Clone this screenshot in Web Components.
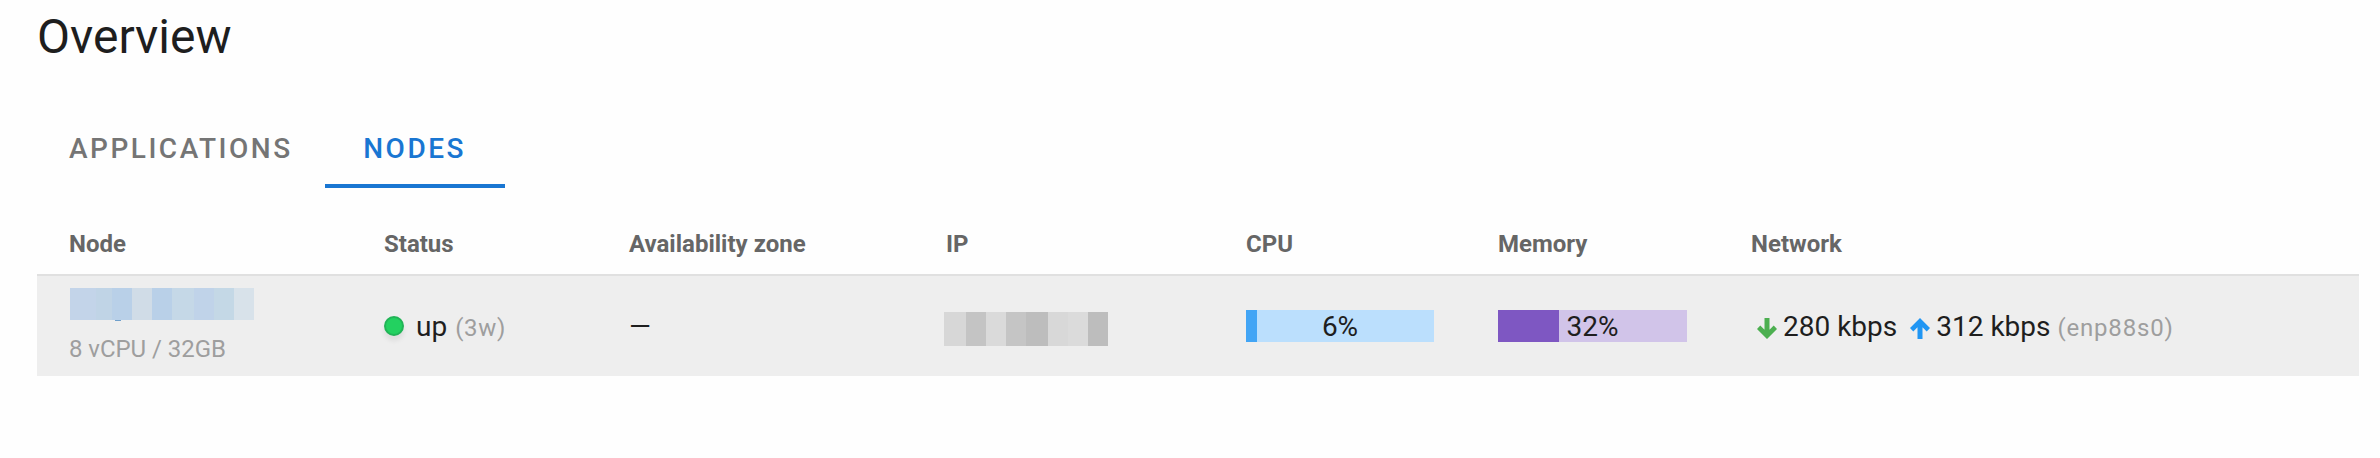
<!DOCTYPE html>
<html lang="en">
<head>
<meta charset="utf-8">
<title>Overview</title>
<style>
body{margin:0;background:#fefefe;font-family:Roboto,sans-serif;color:#1e1e1e}
</style>
</head>
<body>
<overview-page></overview-page>
<script>
const define=(name,html)=>customElements.define(name,class extends HTMLElement{
  constructor(){
    super();
    const t=document.createElement('template');
    t.innerHTML=html;
    this.attachShadow({mode:'open'}).append(t.content.cloneNode(true));
  }
});

define('tab-item',`<style>
:host{display:flex;flex-direction:column;align-items:center;min-width:180px;height:96px;box-sizing:border-box;padding:0 32px;font-size:28px;font-weight:500;letter-spacing:2.5px;line-height:114px;color:#757575;border-bottom:4px solid transparent}
:host([active]){color:#1976d2;border-bottom-color:#1976d2}
</style><slot></slot>`);

define('status-led',`<style>
:host{display:block;width:20px;height:20px;box-sizing:border-box;border-radius:50%;background:#23d160;border:2px solid #21b457;box-shadow:0 5px 5px rgba(0,0,0,.07)}
</style>`);

define('net-arrow',`<style>
:host{display:block;width:20px;height:21px;color:#4caf50}
:host([up]){color:#2196f3;transform:rotate(180deg)}
svg{display:block}
</style><svg width="20" height="21" viewBox="0 0 20 21"><path fill="currentColor" d="M7.5 0h5v11.8L16.7 7.6 20 10.9 10 21 0 10.9 3.3 7.6 7.5 11.8z"/></svg>`);

customElements.define('usage-bar',class extends HTMLElement{
  constructor(){
    super();
    this.attachShadow({mode:'open'}).innerHTML=`<style>
:host{display:block;height:32px;line-height:33px;font-size:28px;text-align:center;
 background:linear-gradient(90deg,var(--fill) var(--value),var(--track) var(--value))}
</style><slot></slot>`;
  }
  connectedCallback(){this.style.setProperty('--value',this.getAttribute('value')+'%')}
});

customElements.define('redacted-text',class extends HTMLElement{
  connectedCallback(){
    const cells=this.getAttribute('cells').split(' ').map(c=>{
      const [w,color]=c.split(':');
      return `<i style="width:${w}px;background:${color}"></i>`;
    }).join('');
    this.attachShadow({mode:'open'}).innerHTML=`<style>:host{display:flex}i{display:block}</style>${cells}`;
  }
});

define('muted-text',`<style>
:host{display:block;font-size:24px;line-height:32px;color:#9e9e9e;white-space:pre}
</style><slot></slot>`);

define('nodes-table',`<style>
:host{display:block}
.row{display:grid;grid-template-columns:315px 245px 317px 300px 252px 253px 1fr}
.row>*{padding-left:32px}
.head{height:64px;border-bottom:2px solid #e0e0e0;font-size:24px;font-weight:700;line-height:69px;color:#666}
.body{height:100px;background:#eee;font-size:28px;line-height:32px}
.cell{display:flex;align-items:center;padding-top:2px}
.node{display:flex;flex-direction:column;padding-top:12px;padding-left:33px}
.node redacted-text{height:32px;position:relative}
.node redacted-text+b{width:6px;height:1px;margin-left:45px;background:#6f9fcb}
.node muted-text{margin:12px 0 0 -1px;letter-spacing:-.05px}
.ip{padding-left:30px;padding-top:6px}
.ip redacted-text{height:34px}
status-led{margin-right:12px;margin-top:-2px}
.status muted-text{margin:2px 0 0 8px;letter-spacing:.7px}
usage-bar{width:189px;margin-top:-2px}
usage-bar.cpu{width:188px}
.net{padding-left:38px}
net-arrow{margin:2px 6px 0 0}
net-arrow[up]{margin:3px 6px 0 13px}
.net muted-text{margin:2px 0 0 7px;letter-spacing:.8px}
</style>
<div class="row head"><div>Node</div><div>Status</div><div>Availability zone</div><div>IP</div><div>CPU</div><div>Memory</div><div>Network</div></div>
<div class="row body">
<div class="node"><redacted-text cells="26:#c3d4e9 16:#c0d4e6 20:#b9d0e8 20:#d0dce7 20:#b9d0e8 22:#c5d8e7 20:#c0d3e9 20:#c4d8e6 20:#d8e2ea"></redacted-text><b></b><muted-text>8 vCPU / 32GB</muted-text></div>
<div class="cell status"><status-led></status-led><span>up</span><muted-text>(3w)</muted-text></div>
<div class="cell"><span>—</span></div>
<div class="cell ip"><redacted-text cells="22:#d7d7d7 20:#c4c4c4 20:#dadada 20:#c5c5c5 22:#bdbdbd 20:#d8d8d8 20:#dbdbdb 20:#bdbdbd"></redacted-text></div>
<div class="cell"><usage-bar class="cpu" value="6" style="--fill:#42a5f5;--track:#bbdffd">6%</usage-bar></div>
<div class="cell"><usage-bar value="32.3" style="--fill:#7e57c2;--track:#d1c4e9">32%</usage-bar></div>
<div class="cell net"><net-arrow></net-arrow><span>280 kbps</span><net-arrow up></net-arrow><span>312 kbps</span><muted-text>(enp88s0)</muted-text></div>
</div>`);

define('overview-page',`<style>
:host{display:block;height:458px;box-sizing:border-box;padding:5px 21px 0 37px}
h1{margin:0;height:87px;font-size:48px;font-weight:400;line-height:64px}
nav{display:flex;margin-bottom:22px}
</style><h1>Overview</h1>
<nav><tab-item>APPLICATIONS</tab-item><tab-item active>NODES</tab-item></nav>
<nodes-table></nodes-table>`);
</script>
</body>
</html>
